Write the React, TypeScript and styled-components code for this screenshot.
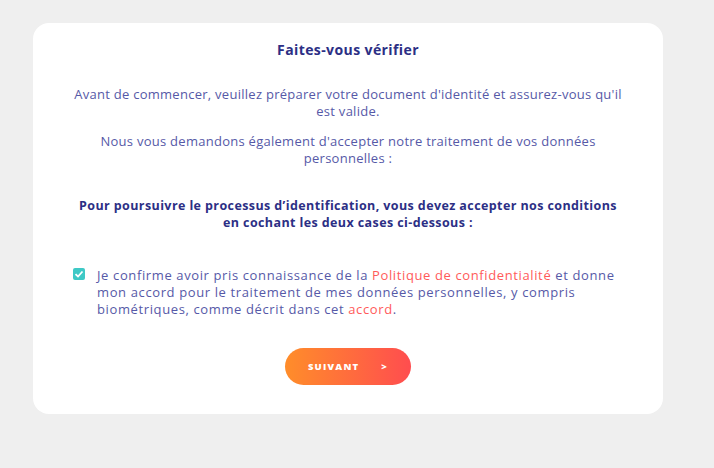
import React, { useState } from "react";
import styled, { createGlobalStyle } from "styled-components";

const GlobalStyle = createGlobalStyle`
	html, body {
		margin: 0;
		padding: 0;
		background: #efefef;
	}
	body {
		font-family: "Open Sans", "Noto Sans", sans-serif;
	}
`;

const Page = styled.div`
	min-height: 468px;
	padding: 23px 0 0 33px;
	box-sizing: border-box;
`;

const Card = styled.section`
	width: 630px;
	height: 391px;
	box-sizing: border-box;
	background: #ffffff;
	border-radius: 16px;
	padding: 18px 30px 0;
	display: flex;
	flex-direction: column;
	align-items: center;
	text-align: center;
`;

const Title = styled.h2`
	margin: 0;
	font-size: 14px;
	font-weight: 700;
	letter-spacing: 0.4px;
	line-height: 18px;
	color: #2c2f85;
`;

const Text = styled.p<{ $top?: number }>`
	margin: ${(p) => p.$top ?? 0}px 0 0;
	font-size: 13px;
	letter-spacing: 0.27px;
	line-height: 17px;
	color: #5659a7;
`;

const Strong = styled.p`
	margin: 30px 0 0;
	max-width: 548px;
	font-size: 12.5px;
	font-weight: 700;
	letter-spacing: 0.4px;
	line-height: 17px;
	color: #2c2f85;
`;

const CheckRow = styled.label`
	display: flex;
	align-items: flex-start;
	gap: 12px;
	margin-top: 36px;
	align-self: stretch;
	padding: 0 0 0 10px;
	text-align: left;
	cursor: pointer;
`;

const Box = styled.span<{ $checked: boolean }>`
	flex: none;
	width: 12px;
	height: 12px;
	margin-top: 1px;
	border-radius: 2px;
	background: ${(p) => (p.$checked ? "#3ec9c6" : "#ffffff")};
	border: ${(p) => (p.$checked ? "none" : "1px solid #9a9cc8")};
	display: flex;
	align-items: center;
	justify-content: center;
`;

const Hidden = styled.input`
	display: none;
`;

const CheckText = styled.span`
	font-size: 13px;
	letter-spacing: 0.62px;
	line-height: 17px;
	color: #5659a7;
	max-width: 532px;
`;

const Link = styled.a`
	color: #ff5a5a;
	text-decoration: none;
`;

const Button = styled.button`
	margin-top: 30px;
	width: 126px;
	height: 37px;
	border: none;
	border-radius: 19px;
	background: linear-gradient(90deg, #ff8d2a 0%, #ff4d4f 100%);
	color: #ffffff;
	font-family: "Open Sans", sans-serif;
	font-size: 9.5px;
	font-weight: 800;
	letter-spacing: 1.2px;
	display: flex;
	align-items: center;
	justify-content: center;
	gap: 22px;
	cursor: pointer;
`;

export default function App() {
	const [checked, setChecked] = useState(true);
	return (
		<>
			<GlobalStyle />
			<Page>
				<Card>
					<Title>Faites-vous vérifier</Title>
					<Text $top={27}>
						Avant de commencer, veuillez préparer votre document d'identité et assurez-vous qu'il
						est valide.
					</Text>
					<Text $top={13}>
						Nous vous demandons également d'accepter notre traitement de vos données personnelles :
					</Text>
					<Strong>
						Pour poursuivre le processus d’identification, vous devez accepter nos conditions en
						cochant les deux cases ci-dessous :
					</Strong>
					<CheckRow>
						<Hidden type="checkbox" checked={checked} onChange={() => setChecked(!checked)} />
						<Box $checked={checked}>
							{checked && (
								<svg width="10" height="10" viewBox="0 0 10 10">
									<path d="M1.5 5.2 L4 7.5 L8.5 2.5" fill="none" stroke="#fff" strokeWidth="1.8" />
								</svg>
							)}
						</Box>
						<CheckText>
							Je confirme avoir pris connaissance de la <Link href="#">Politique de confidentialité</Link> et
							donne mon accord pour le traitement de mes données personnelles, y compris biométriques,
							comme décrit dans cet <Link href="#">accord</Link>.
						</CheckText>
					</CheckRow>
					<Button>
						<span>SUIVANT</span>
						<span>&gt;</span>
					</Button>
				</Card>
			</Page>
		</>
	);
}
